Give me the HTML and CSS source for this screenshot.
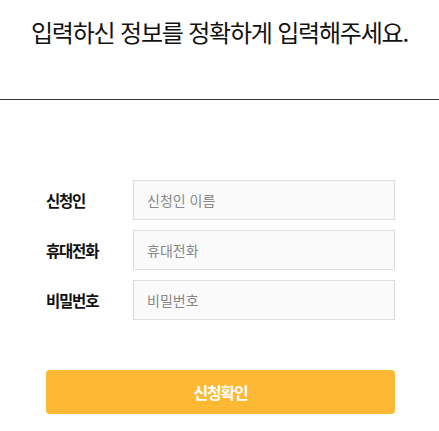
FILE: index.html
```html
<!DOCTYPE html>
<html lang="ko">
<head>
<meta charset="utf-8">
<link rel="stylesheet" href="styles.css">
</head>
<body>
<div class="page">
  <h1 class="title">입력하신 정보를 정확하게 입력해주세요.</h1>
  <form class="form">
    <div class="row">
      <label class="label">신청인</label>
      <input class="input" type="text" placeholder="신청인 이름">
    </div>
    <div class="row">
      <label class="label">휴대전화</label>
      <input class="input" type="text" placeholder="휴대전화">
    </div>
    <div class="row">
      <label class="label">비밀번호</label>
      <input class="input" type="password" placeholder="비밀번호">
    </div>
    <button class="submit" type="button">신청확인</button>
  </form>
</div>
</body>
</html>
```
FILE: styles.css
```css
* { box-sizing: border-box; }
html, body { margin: 0; padding: 0; background: #fff; }
body {
  font-family: "Noto Sans CJK KR", "Noto Sans", sans-serif;
  color: #111;
}
.page { width: 439px; }
.title {
  margin: 0;
  padding: 15px 0 0;
  height: 100px;
  border-bottom: 1px solid #333;
  text-align: center;
  font-size: 24px;
  font-weight: 400;
  letter-spacing: -1.2px;
  line-height: 34px;
  color: #111;
}
.form {
  padding: 80px 44px 0 46px;
  display: flex;
  flex-direction: column;
  gap: 10px;
}
.row {
  display: flex;
  align-items: center;
  height: 40px;
}
.label {
  width: 87px;
  flex: none;
  font-size: 15.5px;
  font-weight: 700;
  color: #111;
  letter-spacing: -1.2px;
}
.input {
  flex: 1;
  height: 40px;
  border: 1px solid #ddd;
  background: #fafafa;
  padding: 0 13px;
  font-family: inherit;
  font-size: 14px;
  color: #333;
  outline: none;
}
.input::placeholder { color: #888; }
.submit {
  margin-top: 40px;
  height: 44px;
  border: 0;
  border-radius: 4px;
  background: #fdb933;
  color: #fff;
  font-family: inherit;
  font-size: 16px;
  font-weight: 700;
  letter-spacing: -1.2px;
}
```
